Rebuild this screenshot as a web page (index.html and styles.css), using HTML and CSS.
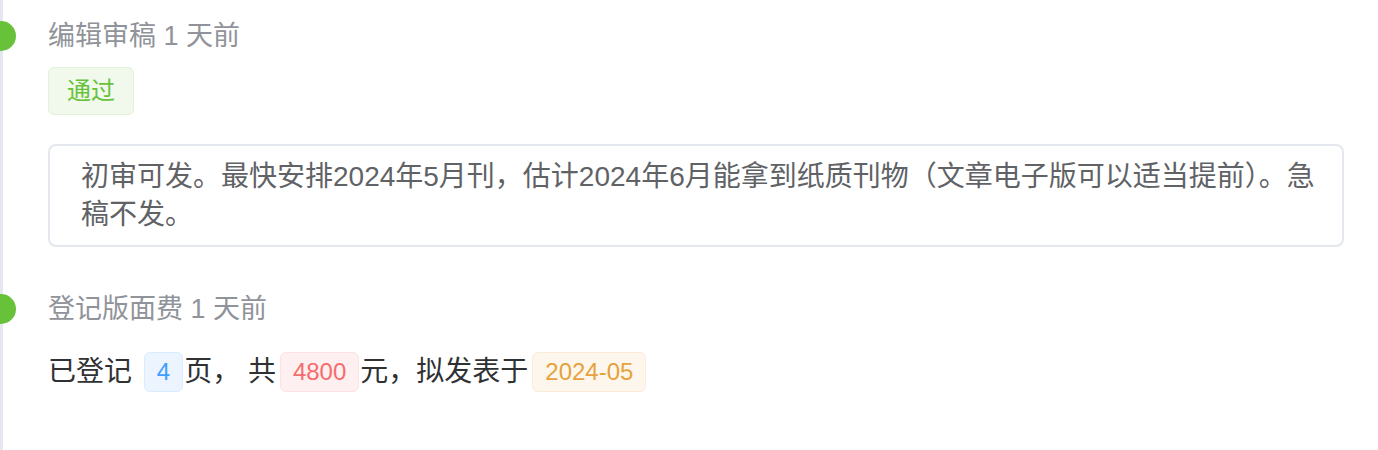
FILE: index.html
```html
<!DOCTYPE html>
<html>
<head>
  <title>审稿记录</title>
  <meta charset="UTF-8">
  <link rel="stylesheet" href="styles.css">
</head>
<body>
  <ul class="timeline">
    <li class="timeline-item">
      <div class="timeline-tail"></div>
      <div class="timeline-node"></div>
      <div class="timeline-title">编辑审稿 1 天前</div>
      <div class="timeline-body">
        <span class="tag tag-success">通过</span>
        <div class="remark">初审可发。最快安排2024年5月刊，估计2024年6月能拿到纸质刊物（文章电子版可以适当提前）。急稿不发。</div>
      </div>
    </li>
    <li class="timeline-item">
      <div class="timeline-tail"></div>
      <div class="timeline-node"></div>
      <div class="timeline-title">登记版面费 1 天前</div>
      <div class="timeline-body">
        <p class="fee-line">已登记 <span class="tag tag-inline tag-primary">4</span>页， 共<span class="tag tag-inline tag-danger">4800</span>元，拟发表于<span class="tag tag-inline tag-warning">2024-05</span></p>
      </div>
    </li>
  </ul>
</body>
</html>
```

FILE: styles.css
```css
:root {
  --text-main: #303133;
  --text-regular: #606266;
  --text-muted: #909399;
  --line-color: #e4e7ed;
  --node-color: #67c23a;
}

body {
  margin: 0;
  background-color: #ffffff;
  font-family: "Liberation Sans", "Noto Sans CJK SC", sans-serif;
  color: var(--text-main);
  overflow: hidden;
}

.timeline {
  list-style: none;
  margin: 0;
  padding: 0;
}

.timeline-item {
  position: relative;
  padding-left: 48px;
  padding-top: 20px;
  padding-bottom: 26px;
}

.timeline-item:last-child {
  padding-bottom: 56px;
}

/* vertical line running down the left edge */
.timeline-tail {
  position: absolute;
  left: 0;
  top: 0;
  bottom: 0;
  width: 3px;
  background-color: var(--line-color);
}

.timeline-node {
  position: absolute;
  left: -14px;
  top: 21px;
  width: 30px;
  height: 30px;
  border-radius: 50%;
  background-color: var(--node-color);
}

.timeline-title {
  font-size: 27px;
  line-height: 32px;
  color: var(--text-muted);
}

.timeline-body {
  padding-top: 15px;
}

.tag {
  display: inline-block;
  box-sizing: border-box;
  border: 1px solid;
  border-radius: 6px;
  white-space: nowrap;
}

.tag-success {
  height: 48px;
  line-height: 46px;
  padding: 0 18px;
  font-size: 24px;
  background-color: #f0f9eb;
  border-color: #e1f3d8;
  color: #67c23a;
}

.tag-inline {
  height: 40px;
  line-height: 38px;
  padding: 0 12px;
  margin: 0 1px 0 4px;
  font-size: 24px;
  vertical-align: middle;
  position: relative;
  top: -2px;
}

.tag-primary {
  background-color: #ecf5ff;
  border-color: #d9ecff;
  color: #409eff;
}

.tag-danger {
  background-color: #fef0f0;
  border-color: #fde2e2;
  color: #f56c6c;
}

.tag-warning {
  background-color: #fdf6ec;
  border-color: #faecd8;
  color: #e6a23c;
}

.remark {
  margin-top: 29px;
  margin-right: 34px;
  padding: 12px 18px 11px 31px;
  border: 2px solid var(--line-color);
  border-radius: 8px;
  font-size: 28px;
  line-height: 38px;
  color: var(--text-regular);
}

.fee-line {
  margin: 12px 0 0;
  font-size: 28px;
  line-height: 40px;
  color: var(--text-main);
}
```
